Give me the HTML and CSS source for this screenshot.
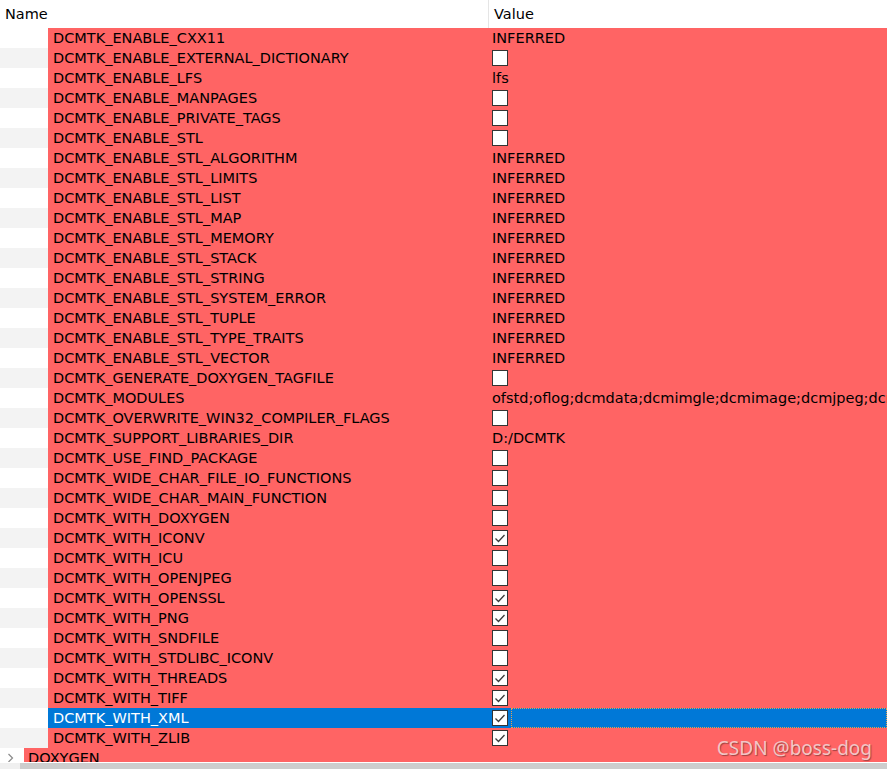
FILE: index.html
```html
<!DOCTYPE html>
<html>
<head>
<meta charset="utf-8">
<link rel="stylesheet" href="styles.css">
</head>
<body>
<div class="app">
  <div class="header">
    <div class="hcell hname">Name</div>
    <div class="hcell hvalue">Value</div>
  </div>
  <div class="rows">
    <div class="row"><div class="gutter"></div><div class="name">DCMTK_ENABLE_CXX11</div><div class="value">INFERRED</div></div>
    <div class="row alt"><div class="gutter"></div><div class="name">DCMTK_ENABLE_EXTERNAL_DICTIONARY</div><div class="value"><span class="cb"></span></div></div>
    <div class="row"><div class="gutter"></div><div class="name">DCMTK_ENABLE_LFS</div><div class="value">lfs</div></div>
    <div class="row alt"><div class="gutter"></div><div class="name">DCMTK_ENABLE_MANPAGES</div><div class="value"><span class="cb"></span></div></div>
    <div class="row"><div class="gutter"></div><div class="name">DCMTK_ENABLE_PRIVATE_TAGS</div><div class="value"><span class="cb"></span></div></div>
    <div class="row alt"><div class="gutter"></div><div class="name">DCMTK_ENABLE_STL</div><div class="value"><span class="cb"></span></div></div>
    <div class="row"><div class="gutter"></div><div class="name">DCMTK_ENABLE_STL_ALGORITHM</div><div class="value">INFERRED</div></div>
    <div class="row alt"><div class="gutter"></div><div class="name">DCMTK_ENABLE_STL_LIMITS</div><div class="value">INFERRED</div></div>
    <div class="row"><div class="gutter"></div><div class="name">DCMTK_ENABLE_STL_LIST</div><div class="value">INFERRED</div></div>
    <div class="row alt"><div class="gutter"></div><div class="name">DCMTK_ENABLE_STL_MAP</div><div class="value">INFERRED</div></div>
    <div class="row"><div class="gutter"></div><div class="name">DCMTK_ENABLE_STL_MEMORY</div><div class="value">INFERRED</div></div>
    <div class="row alt"><div class="gutter"></div><div class="name">DCMTK_ENABLE_STL_STACK</div><div class="value">INFERRED</div></div>
    <div class="row"><div class="gutter"></div><div class="name">DCMTK_ENABLE_STL_STRING</div><div class="value">INFERRED</div></div>
    <div class="row alt"><div class="gutter"></div><div class="name">DCMTK_ENABLE_STL_SYSTEM_ERROR</div><div class="value">INFERRED</div></div>
    <div class="row"><div class="gutter"></div><div class="name">DCMTK_ENABLE_STL_TUPLE</div><div class="value">INFERRED</div></div>
    <div class="row alt"><div class="gutter"></div><div class="name">DCMTK_ENABLE_STL_TYPE_TRAITS</div><div class="value">INFERRED</div></div>
    <div class="row"><div class="gutter"></div><div class="name">DCMTK_ENABLE_STL_VECTOR</div><div class="value">INFERRED</div></div>
    <div class="row alt"><div class="gutter"></div><div class="name">DCMTK_GENERATE_DOXYGEN_TAGFILE</div><div class="value"><span class="cb"></span></div></div>
    <div class="row"><div class="gutter"></div><div class="name">DCMTK_MODULES</div><div class="value">ofstd;oflog;dcmdata;dcmimgle;dcmimage;dcmjpeg;dcmjpls;dcmtls;dcmnet;dcmsr;dcmsign;dcmwlm;dcmqrdb;dcmpstat;dcmrt;dcmiod;dcmfg;dcmseg;dcmtract;dcmpmap</div></div>
    <div class="row alt"><div class="gutter"></div><div class="name">DCMTK_OVERWRITE_WIN32_COMPILER_FLAGS</div><div class="value"><span class="cb"></span></div></div>
    <div class="row"><div class="gutter"></div><div class="name">DCMTK_SUPPORT_LIBRARIES_DIR</div><div class="value">D:/DCMTK</div></div>
    <div class="row alt"><div class="gutter"></div><div class="name">DCMTK_USE_FIND_PACKAGE</div><div class="value"><span class="cb"></span></div></div>
    <div class="row"><div class="gutter"></div><div class="name">DCMTK_WIDE_CHAR_FILE_IO_FUNCTIONS</div><div class="value"><span class="cb"></span></div></div>
    <div class="row alt"><div class="gutter"></div><div class="name">DCMTK_WIDE_CHAR_MAIN_FUNCTION</div><div class="value"><span class="cb"></span></div></div>
    <div class="row"><div class="gutter"></div><div class="name">DCMTK_WITH_DOXYGEN</div><div class="value"><span class="cb"></span></div></div>
    <div class="row alt"><div class="gutter"></div><div class="name">DCMTK_WITH_ICONV</div><div class="value"><span class="cb"><svg viewBox="0 0 14 14" width="14" height="14"><path d="M2.5 7.5 L5.5 10.5 L11.5 4" fill="none" stroke="#3a3a3a" stroke-width="1.3"/></svg></span></div></div>
    <div class="row"><div class="gutter"></div><div class="name">DCMTK_WITH_ICU</div><div class="value"><span class="cb"></span></div></div>
    <div class="row alt"><div class="gutter"></div><div class="name">DCMTK_WITH_OPENJPEG</div><div class="value"><span class="cb"></span></div></div>
    <div class="row"><div class="gutter"></div><div class="name">DCMTK_WITH_OPENSSL</div><div class="value"><span class="cb"><svg viewBox="0 0 14 14" width="14" height="14"><path d="M2.5 7.5 L5.5 10.5 L11.5 4" fill="none" stroke="#3a3a3a" stroke-width="1.3"/></svg></span></div></div>
    <div class="row alt"><div class="gutter"></div><div class="name">DCMTK_WITH_PNG</div><div class="value"><span class="cb"><svg viewBox="0 0 14 14" width="14" height="14"><path d="M2.5 7.5 L5.5 10.5 L11.5 4" fill="none" stroke="#3a3a3a" stroke-width="1.3"/></svg></span></div></div>
    <div class="row"><div class="gutter"></div><div class="name">DCMTK_WITH_SNDFILE</div><div class="value"><span class="cb"></span></div></div>
    <div class="row alt"><div class="gutter"></div><div class="name">DCMTK_WITH_STDLIBC_ICONV</div><div class="value"><span class="cb"></span></div></div>
    <div class="row"><div class="gutter"></div><div class="name">DCMTK_WITH_THREADS</div><div class="value"><span class="cb"><svg viewBox="0 0 14 14" width="14" height="14"><path d="M2.5 7.5 L5.5 10.5 L11.5 4" fill="none" stroke="#3a3a3a" stroke-width="1.3"/></svg></span></div></div>
    <div class="row alt"><div class="gutter"></div><div class="name">DCMTK_WITH_TIFF</div><div class="value"><span class="cb"><svg viewBox="0 0 14 14" width="14" height="14"><path d="M2.5 7.5 L5.5 10.5 L11.5 4" fill="none" stroke="#3a3a3a" stroke-width="1.3"/></svg></span></div></div>
    <div class="row selected"><div class="gutter"></div><div class="name">DCMTK_WITH_XML</div><div class="value"><span class="cb"><svg viewBox="0 0 14 14" width="14" height="14"><path d="M2.5 7.5 L5.5 10.5 L11.5 4" fill="none" stroke="#3a3a3a" stroke-width="1.3"/></svg></span><span class="focus"></span></div></div>
    <div class="row alt"><div class="gutter"></div><div class="name">DCMTK_WITH_ZLIB</div><div class="value"><span class="cb"><svg viewBox="0 0 14 14" width="14" height="14"><path d="M2.5 7.5 L5.5 10.5 L11.5 4" fill="none" stroke="#3a3a3a" stroke-width="1.3"/></svg></span></div></div>
    <div class="row group"><div class="twisty"><svg viewBox="0 0 8 10" width="8" height="10"><path d="M1.5 1 L5.5 5 L1.5 9" fill="none" stroke="#8a8a8a" stroke-width="1.2"/></svg></div><div class="gname">DOXYGEN</div></div>
  </div>
  <div class="hscroll"><div class="sarrow"></div><div class="sthumb"></div></div>
  <div class="watermark">CSDN @boss-dog</div>
</div>
</body>
</html>
```

FILE: styles.css
```css
html, body {
  margin: 0;
  padding: 0;
  background: #ffffff;
}
.app {
  position: relative;
  width: 887px;
  height: 769px;
  overflow: hidden;
  display: flex;
  flex-direction: column;
  font-family: "DejaVu Sans", "Noto Sans", sans-serif;
  font-size: 14.5px;
  color: #000;
}
.header {
  display: flex;
  height: 28px;
  flex: 0 0 28px;
  background: #fff;
}
.hcell {
  line-height: 28px;
  white-space: nowrap;
}
.hname {
  width: 483px;
  padding-left: 5px;
  border-right: 1px solid #e5e5e5;
}
.hvalue {
  padding-left: 5px;
}
.rows {
  flex: 1;
  overflow: hidden;
}
.row {
  display: flex;
  height: 20px;
  line-height: 20px;
  white-space: nowrap;
}
.gutter {
  width: 48px;
  flex: 0 0 48px;
  background: #ffffff;
}
.row.alt .gutter {
  background: #f3f3f3;
}
.name {
  width: 435px;
  flex: 0 0 435px;
  padding-left: 5px;
  background: #ff6464;
  overflow: hidden;
}
.value {
  flex: 1;
  min-width: 0;
  padding-left: 4px;
  background: #ff6464;
  overflow: hidden;
  display: flex;
  align-items: center;
}
.row.selected .name,
.row.selected .value {
  background: #0078d7;
  color: #fff;
}
.cb {
  width: 14px;
  height: 14px;
  flex: 0 0 14px;
  border: 1px solid #333;
  background: #fff;
  display: flex;
}
.focus {
  flex: 1;
  height: 18px;
  margin-left: 3px;
  border: 1px dotted #e8a050;
}
.row.group {
  align-items: stretch;
}
.twisty {
  width: 24px;
  flex: 0 0 24px;
  display: flex;
  align-items: center;
  justify-content: flex-start;
  padding-left: 7px;
  box-sizing: border-box;
  background: #fff;
}
.gname {
  flex: 1;
  background: #ff6464;
  padding-left: 4px;
}
.hscroll {
  flex: 0 0 6px;
  height: 6px;
  border-top: 1px solid #fff;
  display: flex;
}
.sarrow {
  width: 20px;
  background: #f0f0f0;
}
.sthumb {
  flex: 1;
  background: #cdcdcd;
}
.watermark {
  position: absolute;
  right: 15px;
  bottom: 8px;
  font-family: "Noto Sans", "Open Sans", sans-serif;
  font-size: 19px;
  color: #f2c6c6;
  text-shadow: 1px 1px 1px rgba(80, 40, 40, 0.55);
  white-space: nowrap;
}
```
